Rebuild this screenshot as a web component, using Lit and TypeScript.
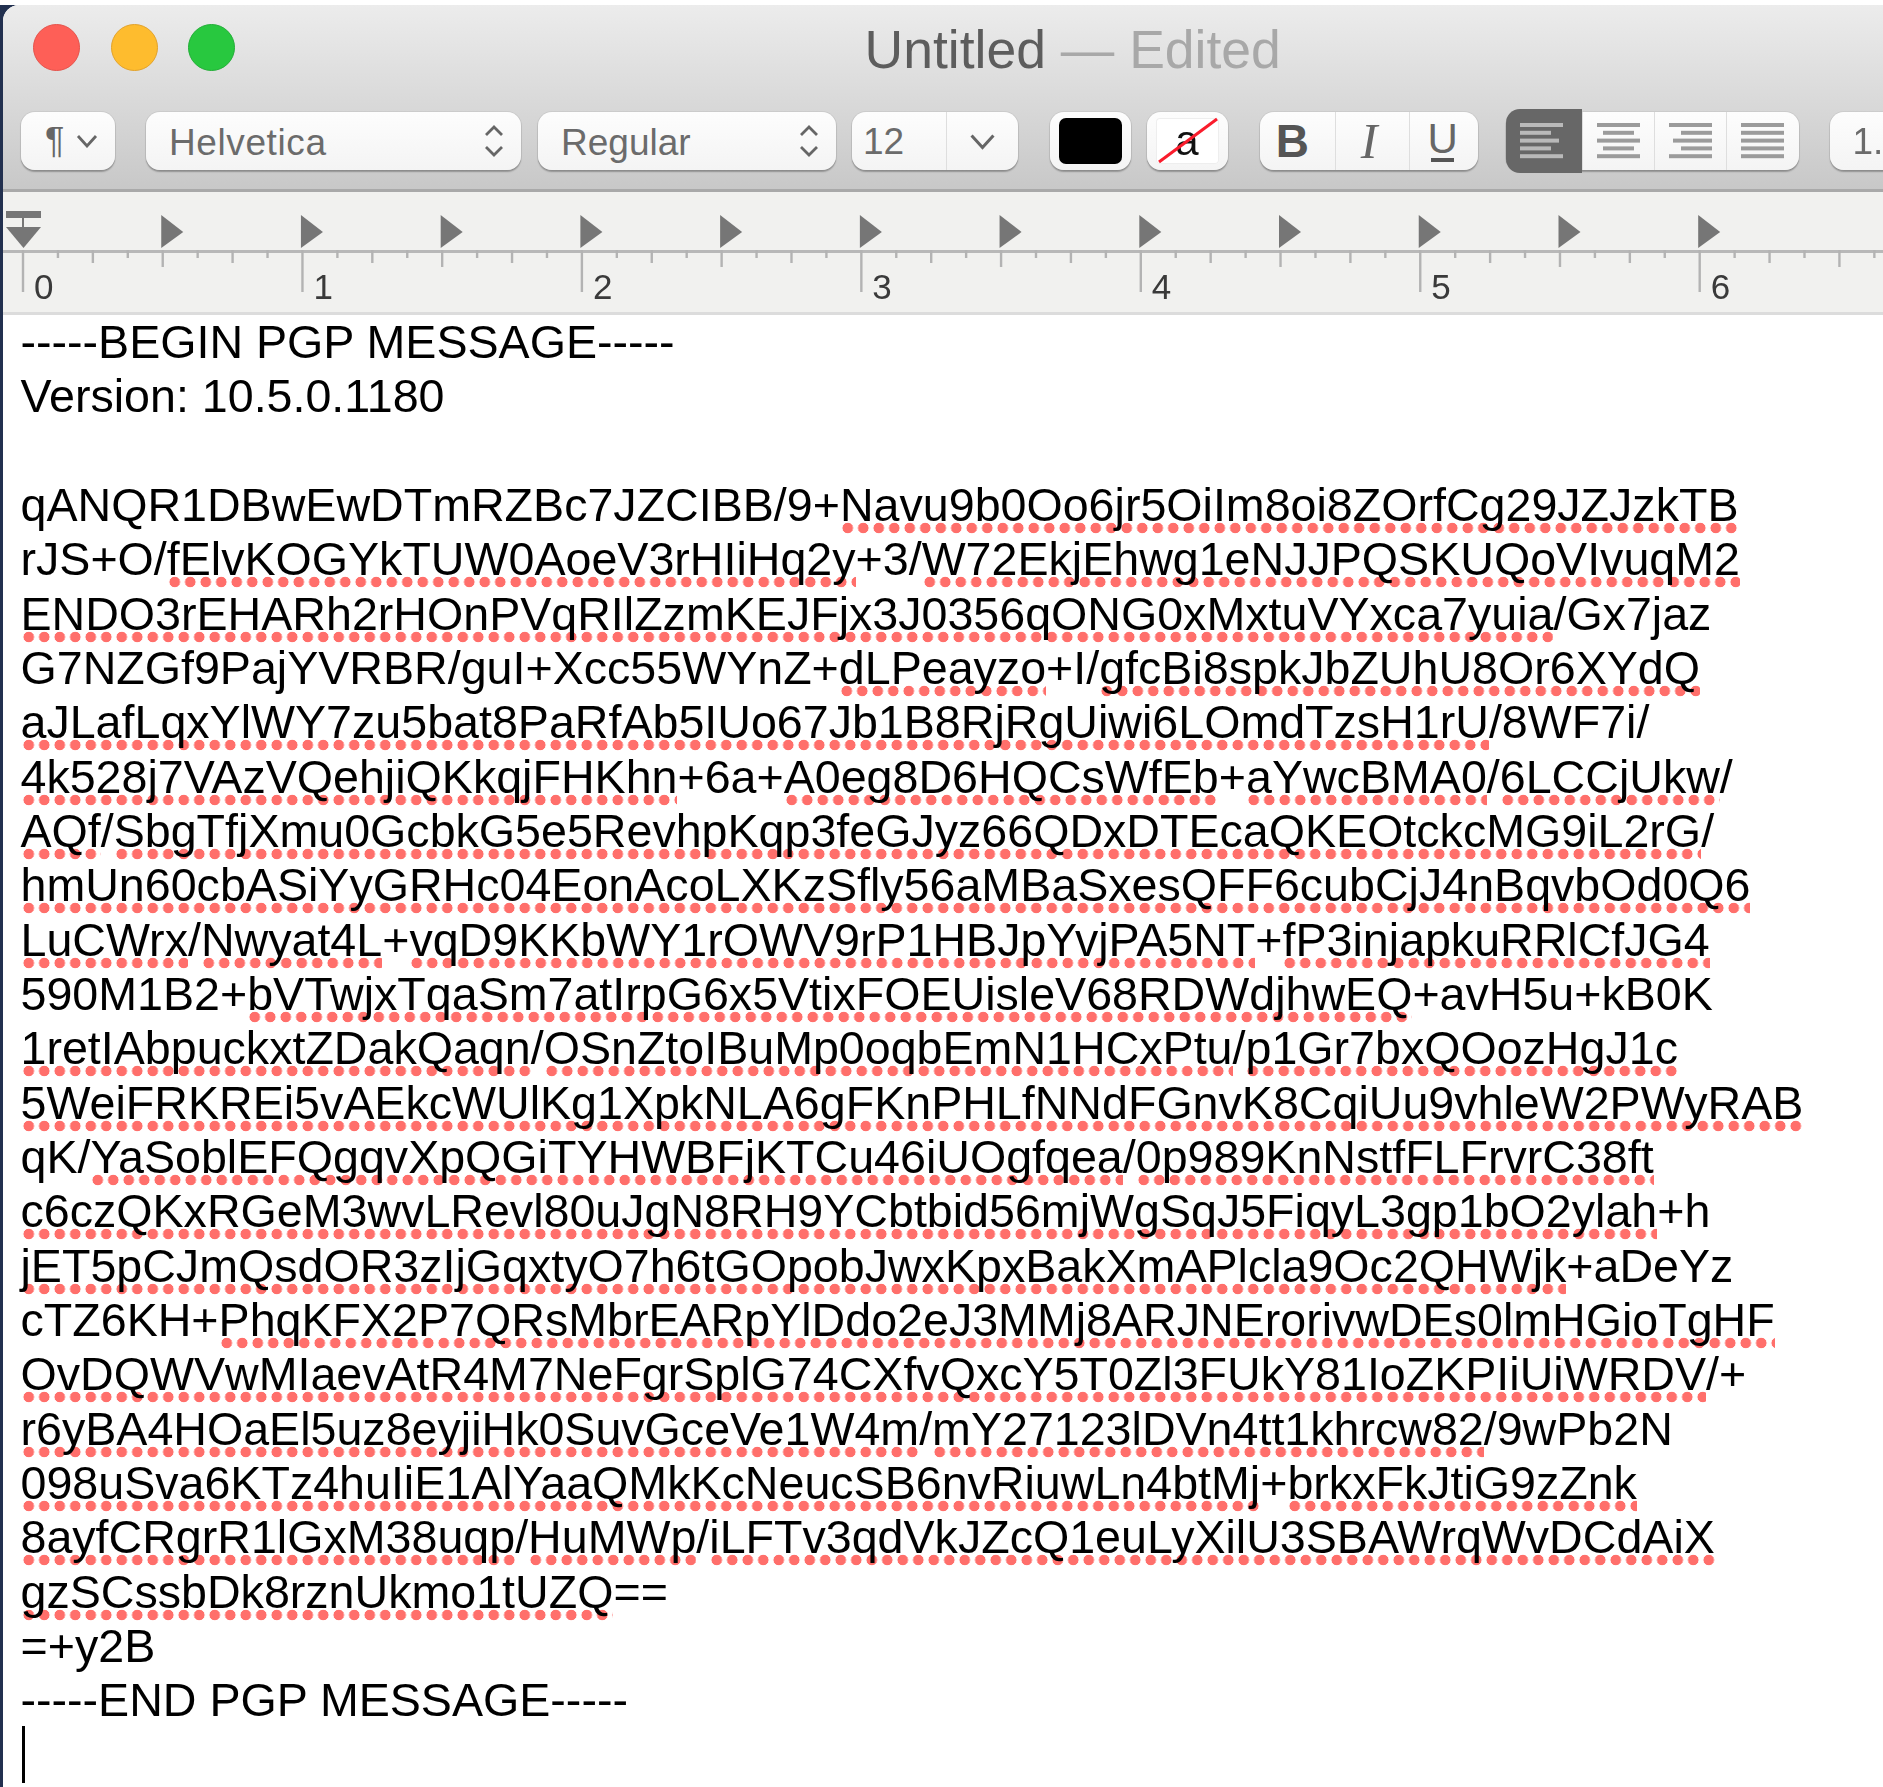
import { LitElement, html, css, svg } from "lit";
import { customElement } from "lit/decorators.js";

const LINES = [
  "-----BEGIN PGP MESSAGE-----",
  "Version: 10.5.0.1180",
  "",
  "qANQR1DBwEwDTmRZBc7JZCIBB/9+[Navu9b0Oo6jr5OiIm8oi8ZOrfCg29JZJzkTB]",
  "rJS+O/[fElvKOGYkTUW0AoeV3rHIiHq2y]+3/[W72EkjEhwg1eNJJPQSKUQoVIvuqM2]",
  "[ENDO3rEHARh2rHOnPVqRIlZzmKEJFjx3J0356qONG0xMxtuVYxca7yuia]/Gx7jaz",
  "G7NZGf9PajYVRBR/guI+Xcc55WYnZ+[dLPeayzo]+I/[gfcBi8spkJbZUhU8Or6XYdQ]",
  "[aJLafLqxYlWY7zu5bat8PaRfAb5IUo67Jb1B8RjRgUiwi6LOmdTzsH1rU]/8WF7i/",
  "[4k528j7VAzVQehjiQKkqjFHKhn]+6a+[A0eg8D6HQCsWfEb]+[aYwcBMA0]/[6LCCjUkw]/",
  "[AQf]/[SbgTfjXmu0GcbkG5e5RevhpKqp3feGJyz66QDxDTEcaQKEOtckcMG9iL2rG]/",
  "[hmUn60cbASiYyGRHc04EonAcoLXKzSfly56aMBaSxesQFF6cubCjJ4nBqvbOd0Q6]",
  "[LuCWrx]/[Nwyat4L]+[vqD9KKbWY1rOWV9rP1HBJpYvjPA5NT]+[fP3injapkuRRlCfJG4]",
  "590M1B2+[bVTwjxTqaSm7atIrpG6x5VtixFOEUisleV68RDWdjhwEQ]+avH5u+kB0K",
  "[1retIAbpuckxtZDakQaqn]/[OSnZtoIBuMp0oqbEmN1HCxPtu]/[p1Gr7bxQOozHgJ1c]",
  "[5WeiFRKREi5vAEkcWUlKg1XpkNLA6gFKnPHLfNNdFGnvK8CqiUu9vhleW2PWyRAB]",
  "qK/[YaSoblEFQgqvXpQGiTYHWBFjKTCu46iUOgfqea]/[0p989KnNstfFLFrvrC38ft]",
  "[c6czQKxRGeM3wvLRevl80uJgN8RH9YCbtbid56mjWgSqJ5FiqyL3gp1bO2ylah]+h",
  "[jET5pCJmQsdOR3zIjGqxtyO7h6tGOpobJwxKpxBakXmAPlcla9Oc2QHWjk]+aDeYz",
  "cTZ6KH+[PhqKFX2P7QRsMbrEARpYlDdo2eJ3MMj8ARJNErorivwDEs0lmHGioTgHF]",
  "[OvDQWVwMIaevAtR4M7NeFgrSplG74CXfvQxcY5T0Zl3FUkY81IoZKPIiUiWRDV]/+",
  "[r6yBA4HOaEl5uz8eyjiHk0SuvGceVe1W4m]/[mY27123lDVn4tt1khrcw82]/9wPb2N",
  "[098uSva6KTz4huIiE1AlYaaQMkKcNeucSB6nvRiuwLn4btMj]+[brkxFkJtiG9zZnk]",
  "[8ayfCRgrR1lGxM38uqp]/[HuMWp]/[iLFTv3qdVkJZcQ1euLyXilU3SBAWrqWvDCdAiX]",
  "[gzSCssbDk8rznUkmo1tUZQ]==",
  "=+y2B",
  "-----END PGP MESSAGE-----",
];

const INCH = 279.45;
const ORIGIN = 20; // ruler zero inside the 3px inset window

function ruler() {
  const ticks = [];
  for (let i = 0; i < 54; i++) {
    const x = ORIGIN + (i * INCH) / 8;
    const y2 = i % 8 === 0 ? 100 : i % 4 === 0 ? 75 : i % 2 === 0 ? 71 : 66;
    ticks.push(svg`<line x1=${x} x2=${x} y1="58" y2=${y2} class="tick"></line>`);
  }
  const tabs = [];
  for (let i = 1; i <= 12; i++) {
    const x = ORIGIN + (i * INCH) / 2 - 1.5;
    tabs.push(svg`<path d="M${x} 23 L${x + 22} 40 L${x} 56 Z" class="mark"></path>`);
  }
  const labels = [];
  for (let i = 0; i <= 6; i++) {
    labels.push(svg`<text x=${ORIGIN + i * INCH + 11} y="107" class="num">${i}</text>`);
  }
  return svg`<svg class="rulersvg" width="1880" height="120" viewBox="0 0 1880 120">
    <rect x="0" y="58" width="1880" height="3" class="base"></rect>
    ${ticks}${tabs}
    <rect x="3" y="19" width="35" height="7" class="mark"></rect>
    <rect x="19" y="26" width="2" height="9" class="mark"></rect>
    <path d="M3 35 L38 35 L20.5 56 Z" class="mark"></path>
    ${labels}
  </svg>`;
}

const chevronDown = html`<svg class="chev" width="22" height="14" viewBox="0 0 22 14"><path d="M2 2 L11 12 L20 2"></path></svg>`;
const upDown = html`<svg class="updown" width="20" height="32" viewBox="0 0 20 32"><path d="M2 10 L10 2 L18 10 M2 22 L10 30 L18 22"></path></svg>`;

function alignIcon(kind: string, widths: number[]) {
  return html`<svg class="lines" width="43" height="36" viewBox="0 0 43 36">
    ${widths.map((w, i) => {
      const x = kind === "left" ? 0 : kind === "center" ? (43 - w) / 2 : 43 - w;
      return svg`<rect x=${x} y=${i * 7.8} width=${w} height="4"></rect>`;
    })}
  </svg>`;
}

@customElement("app-root")
export class AppRoot extends LitElement {
  static styles = css`
    :host { display: block; width: 1883px; height: 1787px; background: #fff; overflow: hidden; padding-top: 5px; box-sizing: border-box; font-family: "Liberation Sans", Arial, sans-serif; }
    .frame { background: #22304f; padding-left: 3px; height: 1782px; }
    .window { background: #fff; border-top-left-radius: 16px; overflow: hidden; height: 100%; display: flex; flex-direction: column; filter: blur(0.5px); }
    .titlebar { background: linear-gradient(#ececec, #c8c8c8); border-bottom: 3px solid #a9a9a9; height: 187px; flex: none; box-sizing: border-box; padding-top: 19px; }
    .titlerow { display: flex; align-items: center; height: 47px; padding-left: 30px; }
    .light { width: 47px; height: 47px; border-radius: 50%; margin-right: 30.5px; box-sizing: border-box; flex: none; }
    .red { background: #fe5f57; border: 1px solid #e5524a; }
    .yellow { background: #febc2e; border: 1px solid #e2a22a; }
    .green { background: #28c83f; border: 1px solid #22ae37; }
    .title { margin-left: 599px; font-size: 53.5px; color: #5d5d5d; white-space: pre; line-height: 47px; padding-top: 3px; }
    .title .dim { color: #a8a8a8; }
    .toolbar { display: flex; margin-top: 41px; height: 58px; padding-left: 18px; }
    .btn { height: 58px; box-sizing: border-box; background: linear-gradient(#fdfdfd, #f4f4f4); border-radius: 14px; box-shadow: 0 0 0 1px rgba(0,0,0,.05), 0 1.5px 1.5px rgba(0,0,0,.28); display: flex; align-items: center; flex: none; font-size: 37px; color: #6b6b6b; }
    .para { width: 94px; padding-left: 24px; gap: 12px; }
    .para .glyph { font-size: 36px; color: #666; }
    .select { justify-content: space-between; padding: 0 17px 0 23px; }
    .select span { padding-top: 3px; }
    .font { width: 375px; margin-left: 31px; letter-spacing: 0.6px; }
    .style { width: 298px; margin-left: 17px; }
    .size { width: 166px; margin-left: 16px; }
    .size .val { width: 95px; padding: 2px 0 0 11px; box-sizing: border-box; border-right: 1.5px solid #dedede; height: 100%; display: flex; align-items: center; }
    .size .arrow { flex: 1; display: flex; justify-content: center; align-items: center; }
    .size .chev { width: 27px; height: 17px; }
    .size .chev path { stroke-width: 2.5; }
    .chev path, .updown path { fill: none; stroke: #666; stroke-width: 2.8; }
    .swatch { width: 81px; padding: 6px 9px; }
    .swatch .fill { flex: 1; height: 100%; border-radius: 7px; background: #000; }
    .fg { margin-left: 32px; }
    .bg { margin-left: 15.5px; position: relative; justify-content: center; }
    .bg .fill { background: #fff; box-shadow: inset 0 0 0 1px #eee; display: flex; align-items: center; justify-content: center; color: #111; font-size: 42px; border-radius: 4px; }
    .slash { position: absolute; left: 0; top: 0; }
    .slash line { stroke: #fa1c2c; stroke-width: 3; }
    .group { padding: 0; align-items: stretch; }
    .cell { flex: 1; display: flex; align-items: center; justify-content: center; border-left: 1.5px solid #dedede; }
    .cell:first-child { border-left: 0; }
    .marks { width: 218px; margin-left: 32px; }
    .b { font-weight: 700; font-size: 46px; color: #555; padding-right: 10px; }
    .i { font-family: "Liberation Serif", serif; font-style: italic; font-size: 50px; color: #666; padding-right: 7px; }
    .u { font-size: 42px; color: #666; flex-direction: column; line-height: 36px; gap: 1px; padding-right: 2px; }
    .u i { display: block; width: 23px; height: 4px; background: #555; }
    .align { width: 293px; margin-left: 28px; }
    .align .on { flex: none; width: 76px; margin: -3px 0; padding-right: 5px; box-sizing: border-box; background: #676767; border: 0; border-radius: 14px 0 0 14px; }
    .lines rect { fill: #9b9b9b; }
    .on .lines rect { fill: #b9b9b9; }
    .spacing { width: 100px; margin-left: 31px; padding: 2px 0 0 23px; }
    .ruler { height: 123px; flex: none; box-sizing: border-box; background: #f1f1ef; border-bottom: 3px solid #dcdcdc; }
    .rulersvg { display: block; }
    .rulersvg .tick { stroke: #b3b3b3; stroke-width: 2.4; }
    .rulersvg .base { fill: #b8b8b8; }
    .rulersvg .mark { fill: #767676; }
    .rulersvg .num { font-family: "Liberation Sans", Arial, sans-serif; font-size: 35px; fill: #3a3a3a; }
    .doc { padding-left: 17.5px; font-size: 46.6px; line-height: 54.33px; color: #000; }
    .line { white-space: pre; height: 54.33px; }
    .miss { background-image: radial-gradient(circle at center, #ff6f6b 0, #ff6f6b 5px, transparent 5.6px); background-size: 15.5px 12px; background-repeat: repeat-x; background-position: 0 100%; padding-bottom: 3px; }
    .caret { width: 3px; height: 57px; background: #000; margin: -2px 0 0 1.5px; }
  `;

  private renderLine(s: string) {
    const parts = s.split(/(\[[^\]]*\])/).filter((p) => p);
    return html`<div class="line">${parts.map((p) =>
      p.startsWith("[") ? html`<span class="miss">${p.slice(1, -1)}</span>` : p
    )}</div>`;
  }

  render() {
    return html`<div class="frame"><div class="window">
      <div class="titlebar">
        <div class="titlerow">
          <span class="light red"></span><span class="light yellow"></span><span class="light green"></span>
          <div class="title">Untitled <span class="dim">— Edited</span></div>
        </div>
        <div class="toolbar">
          <div class="btn para"><span class="glyph">¶</span>${chevronDown}</div>
          <div class="btn select font"><span>Helvetica</span>${upDown}</div>
          <div class="btn select style"><span>Regular</span>${upDown}</div>
          <div class="btn size"><span class="val">12</span><span class="arrow">${chevronDown}</span></div>
          <div class="btn swatch fg"><span class="fill"></span></div>
          <div class="btn swatch bg"><span class="fill">a</span>
            <svg class="slash" width="81" height="58" viewBox="0 0 81 58"><line x1="12" y1="50" x2="70" y2="7"></line></svg>
          </div>
          <div class="btn group marks">
            <div class="cell b">B</div><div class="cell i">I</div><div class="cell u">U<i></i></div>
          </div>
          <div class="btn group align">
            <div class="cell on">${alignIcon("left", [43, 31, 39, 31, 43])}</div>
            <div class="cell">${alignIcon("center", [43, 31, 43, 31, 43])}</div>
            <div class="cell">${alignIcon("right", [43, 31, 39, 31, 43])}</div>
            <div class="cell">${alignIcon("left", [43, 43, 43, 43, 43])}</div>
          </div>
          <div class="btn spacing">1.0</div>
        </div>
      </div>
      <div class="ruler">${ruler()}</div>
      <div class="doc">
        ${LINES.map((l) => this.renderLine(l))}
        <div class="caret"></div>
      </div>
    </div></div>`;
  }
}
